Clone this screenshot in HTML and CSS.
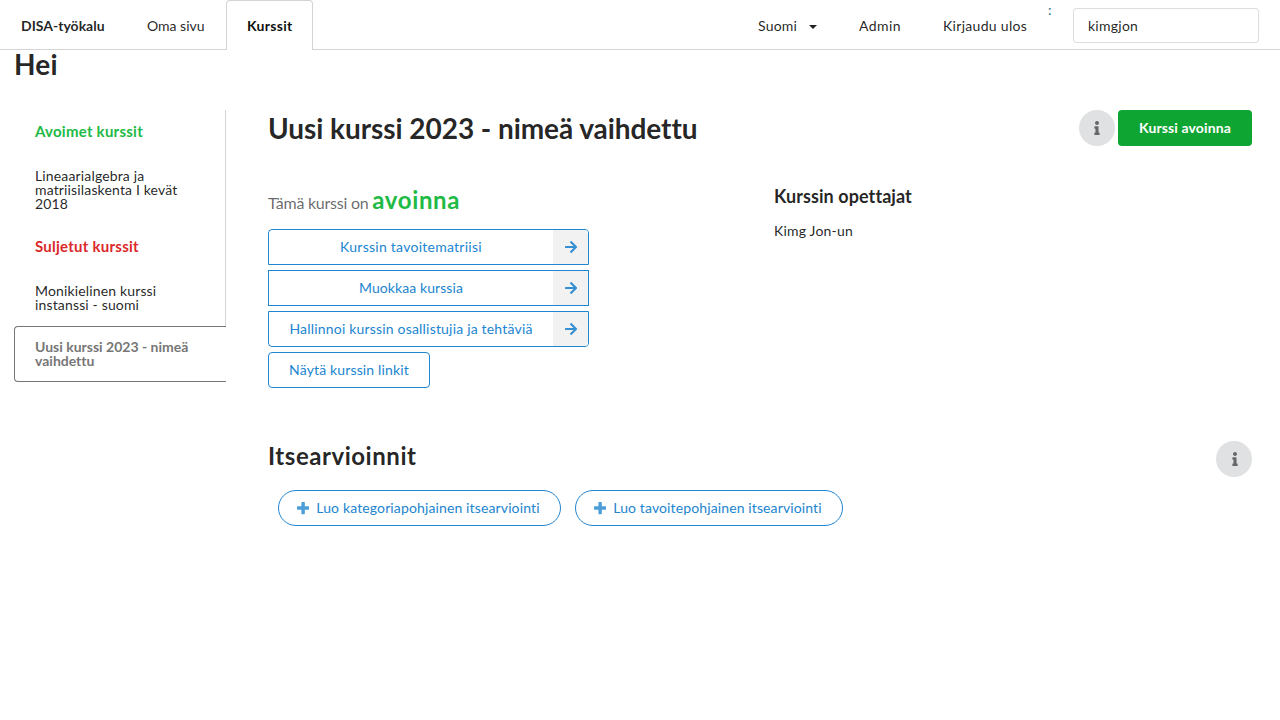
FILE: index.html
```
<!DOCTYPE html>
<html lang="fi">
<head>
<meta charset="utf-8">
<title>DISA-työkalu</title>
<link rel="stylesheet" href="styles.css">
</head>
<body>
<svg class="sprite" aria-hidden="true">
  <symbol id="arrow" viewBox="0 0 448 512"><path d="M190.500 66.900l22.200-22.200c9.400-9.400 24.600-9.400 33.900 0L441 239c9.400 9.400 9.400 24.600 0 33.900L246.600 467.300c-9.400 9.400-24.600 9.400-33.900 0l-22.200-22.200c-9.500-9.500-9.300-25 .4-34.300L311.400 296H24c-13.300 0-24-10.700-24-24v-32c0-13.300 10.700-24 24-24h287.400L190.900 101.200c-9.800-9.300-10-24.800-.4-34.300z"/></symbol>
  <symbol id="plus" viewBox="0 0 448 512"><path d="M448 294.200v-76.400c0-13.300-10.700-24-24-24H286.200V56c0-13.300-10.700-24-24-24h-76.400c-13.300 0-24 10.700-24 24v137.800H24c-13.300 0-24 10.700-24 24v76.400c0 13.300 10.700 24 24 24h137.800V456c0 13.300 10.700 24 24 24h76.400c13.300 0 24-10.700 24-24V318.200H424c13.300 0 24-10.700 24-24z"/></symbol>
  <symbol id="info" viewBox="0 0 192 512"><path d="M20 424.229h20V279.771H20c-11.046 0-20-8.954-20-20V212c0-11.046 8.954-20 20-20h112c11.046 0 20 8.954 20 20v212.229h20c11.046 0 20 8.954 20 20V492c0 11.046-8.954 20-20 20H20c-11.046 0-20-8.954-20-20v-47.771c0-11.046 8.954-20 20-20zM96 0C56.235 0 24 32.235 24 72s32.235 72 72 72 72-32.235 72-72S135.764 0 96 0z"/></symbol>
</svg>
<nav class="nav">
  <a class="nav-item brand">DISA-työkalu</a>
  <a class="nav-item">Oma sivu</a>
  <a class="nav-item active">Kurssit</a>
  <div class="nav-right">
    <a class="nav-item language">Suomi<span class="caret"></span></a>
    <a class="nav-item admin">Admin</a>
    <a class="nav-item logout">Kirjaudu ulos</a>
    <span class="colon">:</span>
    <input class="user-input" type="text" value="kimgjon">
  </div>
</nav>
<h1 class="greeting">Hei</h1>
<div class="layout">
  <aside class="sidebar">
    <div class="side-item side-header open">Avoimet kurssit</div>
    <a class="side-item">Lineaarialgebra ja matriisilaskenta I kevät 2018</a>
    <div class="side-item side-header closed">Suljetut kurssit</div>
    <a class="side-item">Monikielinen kurssi instanssi - suomi</a>
    <a class="side-item selected">Uusi kurssi 2023 - nimeä vaihdettu</a>
  </aside>
  <main class="main">
    <header class="course-header">
      <h1 class="course-title">Uusi kurssi 2023 - nimeä vaihdettu</h1>
      <div class="header-actions">
        <button class="info-button"><svg class="icon-info"><use href="#info"/></svg></button>
        <button class="status-button">Kurssi avoinna</button>
      </div>
    </header>
    <div class="columns">
      <section>
        <p class="status">Tämä kurssi on <span class="status-value">avoinna</span></p>
        <div class="links">
          <a class="link-button first"><span class="link-label">Kurssin tavoitematriisi</span><span class="link-icon"><svg class="icon"><use href="#arrow"/></svg></span></a>
          <a class="link-button middle"><span class="link-label">Muokkaa kurssia</span><span class="link-icon"><svg class="icon"><use href="#arrow"/></svg></span></a>
          <a class="link-button last"><span class="link-label">Hallinnoi kurssin osallistujia ja tehtäviä</span><span class="link-icon"><svg class="icon"><use href="#arrow"/></svg></span></a>
        </div>
        <button class="show-links">Näytä kurssin linkit</button>
      </section>
      <section>
        <h3 class="teachers-title">Kurssin opettajat</h3>
        <div class="teacher">Kimg Jon-un</div>
      </section>
    </div>
    <header class="assess-header">
      <h2 class="assess-title">Itsearvioinnit</h2>
      <button class="info-button"><svg class="icon-info"><use href="#info"/></svg></button>
    </header>
    <div class="create-row">
      <button class="create-button category"><svg class="icon"><use href="#plus"/></svg>Luo kategoriapohjainen itsearviointi</button>
      <button class="create-button objective"><svg class="icon"><use href="#plus"/></svg>Luo tavoitepohjainen itsearviointi</button>
    </div>
  </main>
</div>
</body>
</html>
```
FILE: styles.css
```
* { box-sizing: border-box; }
body {
  margin: 0;
  background: #fff;
  color: rgba(0, 0, 0, .87);
  font: 14px/20px Lato, sans-serif;
  font-variant-ligatures: none;
  overflow: hidden;
}
h1, h2, h3, p { margin: 0; }
button { font: inherit; font-variant-ligatures: none; margin: 0; padding: 0; border: 0; cursor: pointer; }
.sprite { display: none; }
.nav { display: flex; height: 50px; border-bottom: 1px solid #d4d4d5; }
.nav-item { display: flex; flex: none; align-items: center; padding: 3px 0 0 21px; height: 49px; line-height: 14px; white-space: nowrap; }
.brand { width: 126px; font-weight: 700; }
.nav-item:nth-child(2) { width: 100px; }
.nav-item.active {
  width: 87px;
  height: 50px;
  padding: 1px 0 0 20px;
  border: 1px solid #d4d4d5;
  border-bottom: 0;
  border-radius: 4px 4px 0 0;
  background: #fff;
  color: rgba(0, 0, 0, .95);
  font-weight: 700;
  letter-spacing: .3px;
}
.nav-right { display: flex; margin-left: auto; padding-right: 21px; }
.nav-item.language { width: 101px; padding-right: 21px; letter-spacing: .2px; }
.nav-right .nav-item.admin { width: 84px; letter-spacing: .4px; }
.nav-item.logout { width: 126px; letter-spacing: .3px; }
.caret { width: 8px; margin: 1px 0 0 auto; border: 4px solid transparent; border-top-color: currentColor; border-bottom: 0; }
.colon { width: 25px; color: #276f86; }
.user-input {
  width: 186px;
  height: 35px;
  margin-top: 8px;
  padding: 0 14px 1px;
  border: 1px solid rgba(34, 36, 38, .15);
  border-radius: 4px;
  color: rgba(0, 0, 0, .87);
  font: 14px/17px Lato, sans-serif;
  letter-spacing: .25px;
}
.greeting { margin: -4px 0 0 14px; font-size: 28px; line-height: 36px; height: 36px; letter-spacing: .2px; }
.layout { display: flex; padding: 28px 28px 0 14px; }
.sidebar { width: 212px; height: 272px; }
.side-item { display: block; padding: 14px 21px; border-right: 1px solid #d4d4d5; line-height: 14px; letter-spacing: .15px; }
.side-header { height: 45px; padding-top: 13px; font-size: 15px; line-height: 16px; font-weight: 700; letter-spacing: .25px; }
.open, .status-value { color: #21ba45; }
.closed { color: #db2828; }
.side-item.selected {
  padding: 13px 20px;
  border: 1px solid #767676;
  border-right: 0;
  border-radius: 4px 0 0 4px;
  color: #767676;
  font-weight: 700;
  letter-spacing: 0;
}
.main { flex: 1; margin-left: 42px; }
.course-header { display: flex; justify-content: space-between; height: 36px; }
.course-title { font-size: 28px; line-height: 36px; letter-spacing: -.06px; }
.header-actions { display: flex; gap: 3px; }
.info-button { display: grid; place-items: center; width: 36px; height: 36px; border-radius: 50%; background: #e0e1e2; color: rgba(0, 0, 0, .6); }
.assess-header .info-button { padding-left: 1px; }
.icon-info { width: 6px; height: 14px; fill: currentColor; opacity: .9; }
.status-button { width: 134px; height: 36px; border-radius: 4px; background: #0fa532; color: #fff; font-weight: 700; letter-spacing: .12px; }
.columns { display: grid; grid-template-columns: 506px 1fr; margin-top: 38px; }
.status { height: 45px; color: rgba(0, 0, 0, .6); font-size: 16px; line-height: 32px; letter-spacing: -.24px; }
.status-value { font-size: 24px; font-weight: 700; letter-spacing: .65px; }
.links { display: flex; flex-direction: column; gap: 5px; width: 321px; }
.link-button, .show-links, .create-button { border: 1px solid #2185d0; background: #fff; color: #2185d0; }
.link-button { display: flex; height: 36px; line-height: 34px; overflow: hidden; }
.link-button.first { border-radius: 4px 4px 0 0; letter-spacing: .26px; }
.link-button.middle { letter-spacing: .08px; }
.link-button.last { border-radius: 0 0 4px 4px; letter-spacing: .19px; }
.link-label { flex: 1; text-align: center; }
.link-icon { display: grid; place-items: center; width: 35px; padding-left: 1px; background: #f2f2f2; }
.icon { width: 12.25px; height: 14px; fill: currentColor; opacity: .9; }
.show-links { display: block; width: 162px; height: 36px; margin-top: 5px; border-radius: 4px; letter-spacing: .15px; }
.teachers-title { margin-top: 1px; font-size: 18px; line-height: 23px; letter-spacing: .08px; }
.teacher { margin-top: 13px; letter-spacing: .2px; }
.assess-header { display: flex; justify-content: space-between; margin-top: 53px; }
.assess-title { font-size: 24px; line-height: 29px; letter-spacing: .54px; }
.create-row { display: flex; gap: 14px; margin: 13px 0 0 10px; }
.create-button { display: flex; align-items: center; height: 36px; padding: 0 0 0 18px; border-radius: 18px; white-space: nowrap; }
.create-button.category { width: 283px; letter-spacing: .13px; }
.create-button.objective { width: 268px; letter-spacing: .12px; }
.create-button .icon { flex: none; margin-right: 7px; opacity: .8; }
```
